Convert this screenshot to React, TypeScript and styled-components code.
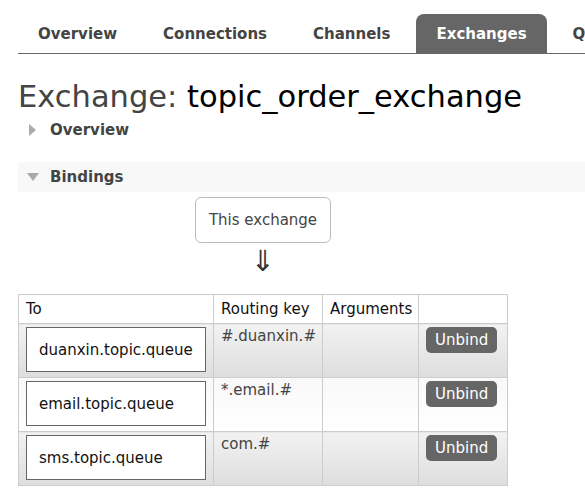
import React from "react";
import styled, { createGlobalStyle } from "styled-components";

const GlobalStyle = createGlobalStyle`
  html, body {
    margin: 0;
    overflow: hidden;
    background: #fff;
  }
  body {
    font-family: "DejaVu Sans", Verdana, sans-serif;
    color: #444;
    font-size: 15px;
  }
`;

const tabs = ["Overview", "Connections", "Channels", "Exchanges", "Queues", "Admin"];

const bindings = [
  { queue: "duanxin.topic.queue", key: "#.duanxin.#" },
  { queue: "email.topic.queue", key: "*.email.#" },
  { queue: "sms.topic.queue", key: "com.#" },
];

const App = () => {
  return (
    <>
      <GlobalStyle />
      <Page>
        <Nav>
          {tabs.map((t) => (
            <Tab key={t} $active={t === "Exchanges"}>
              {t}
            </Tab>
          ))}
        </Nav>

        <Title>
          Exchange: <span>topic_order_exchange</span>
        </Title>

        <Section>
          <Toggle>
            <Arrow $open={false} />
          </Toggle>
          Overview
        </Section>

        <Section $open>
          <Toggle>
            <Arrow $open />
          </Toggle>
          Bindings
        </Section>

        <Bindings>
          <ThisExchange>This exchange</ThisExchange>
          <Down>⇓</Down>
          <List>
            <colgroup>
              <col style={{ width: 195 }} />
              <col style={{ width: 109 }} />
              <col style={{ width: 96 }} />
              <col style={{ width: 89 }} />
            </colgroup>
            <thead>
              <tr>
                <th>To</th>
                <th>Routing key</th>
                <th>Arguments</th>
                <th></th>
              </tr>
            </thead>
            <tbody>
              {bindings.map((b, i) => (
                <Row key={b.queue} $alt={i % 2 === 1}>
                  <td>
                    <Queue>{b.queue}</Queue>
                  </td>
                  <td>{b.key}</td>
                  <td></td>
                  <td>
                    <Unbind>Unbind</Unbind>
                  </td>
                </Row>
              ))}
            </tbody>
          </List>
        </Bindings>
      </Page>
    </>
  );
};

export default App;

const Page = styled.div`
  padding: 14px 0 0 18px;
`;

const Nav = styled.div`
  display: flex;
  gap: 6px;
  border-bottom: 1px solid #666;
  white-space: nowrap;
`;

const Tab = styled.div<{ $active?: boolean }>`
  padding: 1px 20px 0;
  height: 38px;
  line-height: 39px;
  font-weight: bold;
  font-size: 15px;
  border-radius: 8px 8px 0 0;
  background: ${(p) => (p.$active ? "#666" : "transparent")};
  color: ${(p) => (p.$active ? "#fff" : "#444")};
  flex-shrink: 0;
`;

const Title = styled.h1`
  margin: 25px 0 0;
  font-size: 30.5px;
  font-weight: normal;
  line-height: 36px;
  color: #444;

  span {
    color: #000;
  }
`;

const Section = styled.div<{ $open?: boolean }>`
  display: flex;
  align-items: center;
  height: 30px;
  margin-top: ${(p) => (p.$open ? "17px" : "0")};
  padding-left: 8px;
  font-weight: bold;
  font-size: 15px;
  color: #444;
  background: ${(p) => (p.$open ? "#f8f8f8" : "transparent")};
`;

const Toggle = styled.span`
  width: 13px;
  margin-right: 11px;
  display: flex;
  justify-content: center;
`;

const Arrow = styled.span<{ $open?: boolean }>`
  width: 0;
  height: 0;
  ${(p) =>
    p.$open
      ? `border-left: 6.5px solid transparent;
         border-right: 6.5px solid transparent;
         border-top: 8px solid #aaa;`
      : `border-top: 6.5px solid transparent;
         border-bottom: 6.5px solid transparent;
         border-left: 7px solid #aaa;`}
`;

const Bindings = styled.div`
  display: inline-flex;
  flex-direction: column;
  align-items: center;
  margin-top: 5px;
`;

const ThisExchange = styled.div`
  height: 44px;
  line-height: 44px;
  padding: 0 13px;
  border: 1px solid #bbb;
  border-radius: 6px;
  font-size: 15px;
  color: #444;
`;

const Down = styled.div`
  font-size: 29px;
  line-height: 36px;
  height: 51px;
  color: #333;
`;

const List = styled.table`
  border-collapse: collapse;
  table-layout: fixed;
  width: 489px;

  th {
    height: 28px;
    padding: 0 7px;
    text-align: left;
    font-weight: normal;
    font-size: 15px;
    color: #111;
    border: 1px solid #ccc;
    background: #fff;
  }
`;

const Row = styled.tr<{ $alt?: boolean }>`
  td {
    height: 45px;
    padding: 3px 7px 5px;
    vertical-align: top;
    border: 1px solid #ccc;
    font-size: 15px;
    line-height: 18px;
    color: #444;
    background: ${(p) =>
      p.$alt
        ? "linear-gradient(to bottom, #f8f8f8, #fff)"
        : "linear-gradient(to bottom, #f2f2f2, #dedede)"};
  }
`;

const Queue = styled.div`
  height: 43px;
  line-height: 45px;
  padding: 0 12px;
  border: 1px solid #666;
  background: #fff;
  color: #111;
  white-space: nowrap;
`;

const Unbind = styled.button`
  height: 26px;
  padding: 0 9px;
  border: none;
  border-radius: 5px;
  background: #666;
  color: #fff;
  font-family: "DejaVu Sans", Verdana, sans-serif;
  font-size: 15px;
`;
